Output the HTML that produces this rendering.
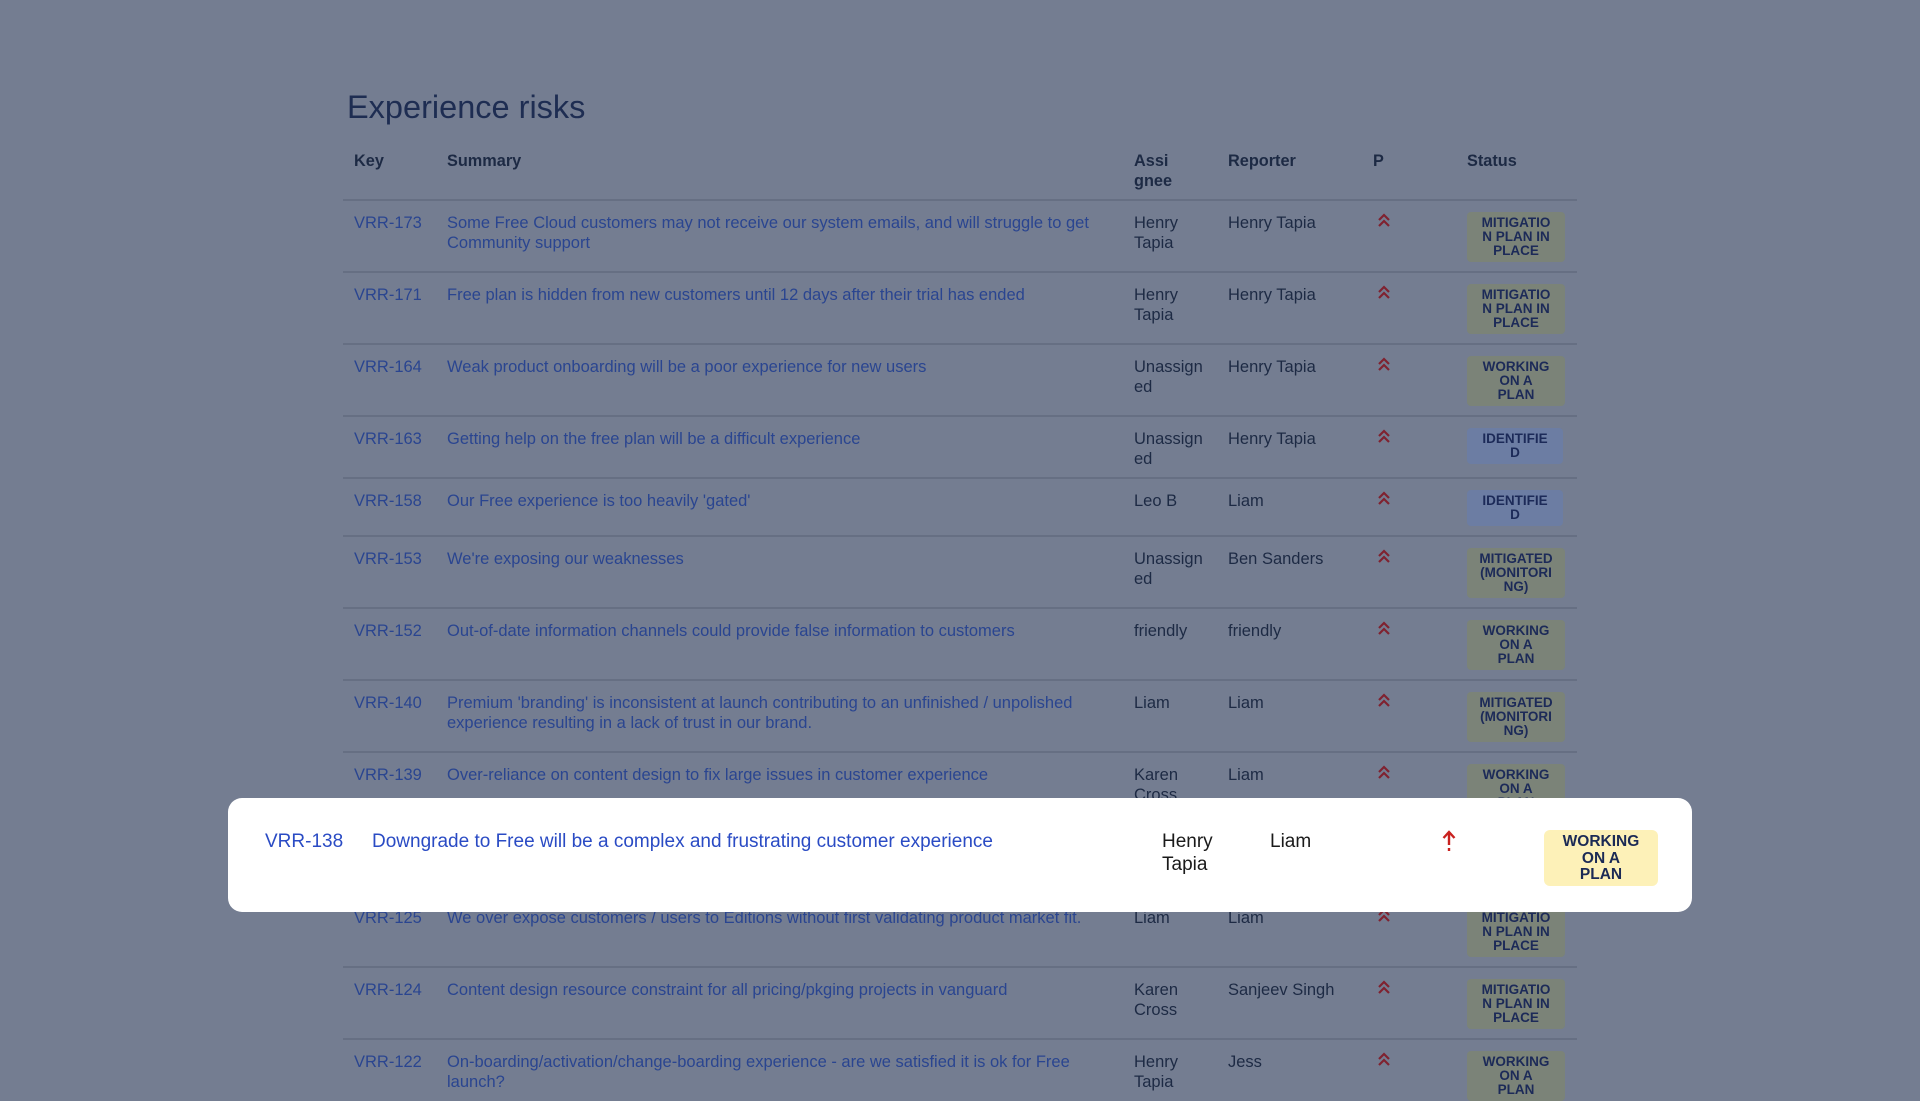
<!DOCTYPE html>
<html><head><meta charset="utf-8"><style>
*{margin:0;padding:0;box-sizing:border-box}
body{width:1920px;height:1080px;background:#747d91;font-family:"Liberation Sans",Arial,sans-serif;overflow:hidden;position:relative;color:#1d2a44}
h1{position:absolute;left:347px;top:89px;font-size:32.5px;font-weight:normal;color:#1e2d52}
.hdr{position:absolute;top:151px;font-weight:bold;font-size:16.3px;line-height:20px;color:#1d2a44}
.sep{position:absolute;left:343px;width:1234px;height:2px;background:#666f83}
.c{position:absolute;font-size:16.5px;line-height:20px}
.k,.s{color:#2a4590}
.lz{position:absolute;left:1467px;width:98px;border-radius:4px;padding:4px 2px;text-align:center;font-weight:bold;font-size:13.5px;line-height:14px;color:#1c2a58;background:#7b8378}
.lz.b{background:#6c7da3;width:96px}
.pr{position:absolute;left:1377px}
.card{position:absolute;left:228px;top:798px;width:1464px;height:114px;background:#fff;border-radius:14px}
.cc{position:absolute;font-size:19px;line-height:23px;color:#1a1a1a}
</style></head><body>
<h1>Experience risks</h1>
<div class="hdr" style="left:354px">Key</div>
<div class="hdr" style="left:447px">Summary</div>
<div class="hdr" style="left:1134px">Assi<br>gnee</div>
<div class="hdr" style="left:1228px">Reporter</div>
<div class="hdr" style="left:1373px">P</div>
<div class="hdr" style="left:1467px">Status</div>

<div id="rows"></div>
<script>
var R=[
["VRR-173","Some Free Cloud customers may not receive our system emails, and will struggle to get<br>Community support","Henry<br>Tapia","Henry Tapia","MITIGATIO<br>N PLAN IN<br>PLACE",0,72],
["VRR-171","Free plan is hidden from new customers until 12 days after their trial has ended","Henry<br>Tapia","Henry Tapia","MITIGATIO<br>N PLAN IN<br>PLACE",0,72],
["VRR-164","Weak product onboarding will be a poor experience for new users","Unassign<br>ed","Henry Tapia","WORKING<br>ON A<br>PLAN",0,72],
["VRR-163","Getting help on the free plan will be a difficult experience","Unassign<br>ed","Henry Tapia","IDENTIFIE<br>D",1,62],
["VRR-158","Our Free experience is too heavily 'gated'","Leo B","Liam","IDENTIFIE<br>D",1,58],
["VRR-153","We're exposing our weaknesses","Unassign<br>ed","Ben Sanders","MITIGATED<br>(MONITORI<br>NG)",0,72],
["VRR-152","Out-of-date information channels could provide false information to customers","friendly","friendly","WORKING<br>ON A<br>PLAN",0,72],
["VRR-140","Premium 'branding' is inconsistent at launch contributing to an unfinished / unpolished<br>experience resulting in a lack of trust in our brand.","Liam","Liam","MITIGATED<br>(MONITORI<br>NG)",0,72],
["VRR-139","Over-reliance on content design to fix large issues in customer experience","Karen<br>Cross","Liam","WORKING<br>ON A<br>PLAN",0,72],
["VRR-138","Downgrade to Free will be a complex and frustrating customer experience","Henry<br>Tapia","Liam","WORKING<br>ON A<br>PLAN",0,71],
["VRR-125","We over expose customers / users to Editions without first validating product market fit.","Liam","Liam","MITIGATIO<br>N PLAN IN<br>PLACE",0,72],
["VRR-124","Content design resource constraint for all pricing/pkging projects in vanguard","Karen<br>Cross","Sanjeev Singh","MITIGATIO<br>N PLAN IN<br>PLACE",0,72],
["VRR-122","On-boarding/activation/change-boarding experience - are we satisfied it is ok for Free<br>launch?","Henry<br>Tapia","Jess","WORKING<br>ON A<br>PLAN",0,72]];
var y=200,h='';
var chev='<svg width="14" height="16" viewBox="0 0 14 16"><path d="M2 8 L7 3 L12 8" fill="none" stroke="#7f2230" stroke-width="2.2"/><path d="M2 14 L7 9 L12 14" fill="none" stroke="#7f2230" stroke-width="2.2"/></svg>';
R.forEach(function(r){
h+='<div class="sep" style="top:'+(y-1)+'px"></div>';
h+='<div class="c k" style="left:354px;top:'+(y+13)+'px">'+r[0]+'</div>';
h+='<div class="c s" style="left:447px;top:'+(y+13)+'px">'+r[1]+'</div>';
h+='<div class="c" style="left:1134px;top:'+(y+13)+'px">'+r[2]+'</div>';
h+='<div class="c" style="left:1228px;top:'+(y+13)+'px">'+r[3]+'</div>';
h+='<div class="pr" style="top:'+(y+12)+'px">'+chev+'</div>';
h+='<div class="lz'+(r[5]?' b':'')+'" style="top:'+(y+12)+'px">'+r[4]+'</div>';
y+=r[6];});
document.getElementById('rows').innerHTML=h;
</script>

<div class="card">
<div class="cc" style="left:37px;top:32px;color:#2a4bc4">VRR-138</div>
<div class="cc" style="left:144px;top:32px;color:#2a4bc4">Downgrade to Free will be a complex and frustrating customer experience</div>
<div class="cc" style="left:934px;top:32px">Henry<br>Tapia</div>
<div class="cc" style="left:1042px;top:32px">Liam</div>
<svg style="position:absolute;left:1213px;top:31px" width="16" height="26" viewBox="0 0 16 26"><path d="M8 3 V16 M8 19 V22" fill="none" stroke="#c9221f" stroke-width="2.4"/><path d="M2.5 9 L8 3 L13.5 9" fill="none" stroke="#c9221f" stroke-width="2.4"/></svg>
<div style="position:absolute;left:1316px;top:32px;width:114px;height:56px;background:#fdf1b8;border-radius:6px;text-align:center;font-weight:bold;font-size:15.5px;line-height:16.5px;padding-top:4px;color:#1b2a55">WORKING<br>ON A<br>PLAN</div>
</div>
</body></html>
